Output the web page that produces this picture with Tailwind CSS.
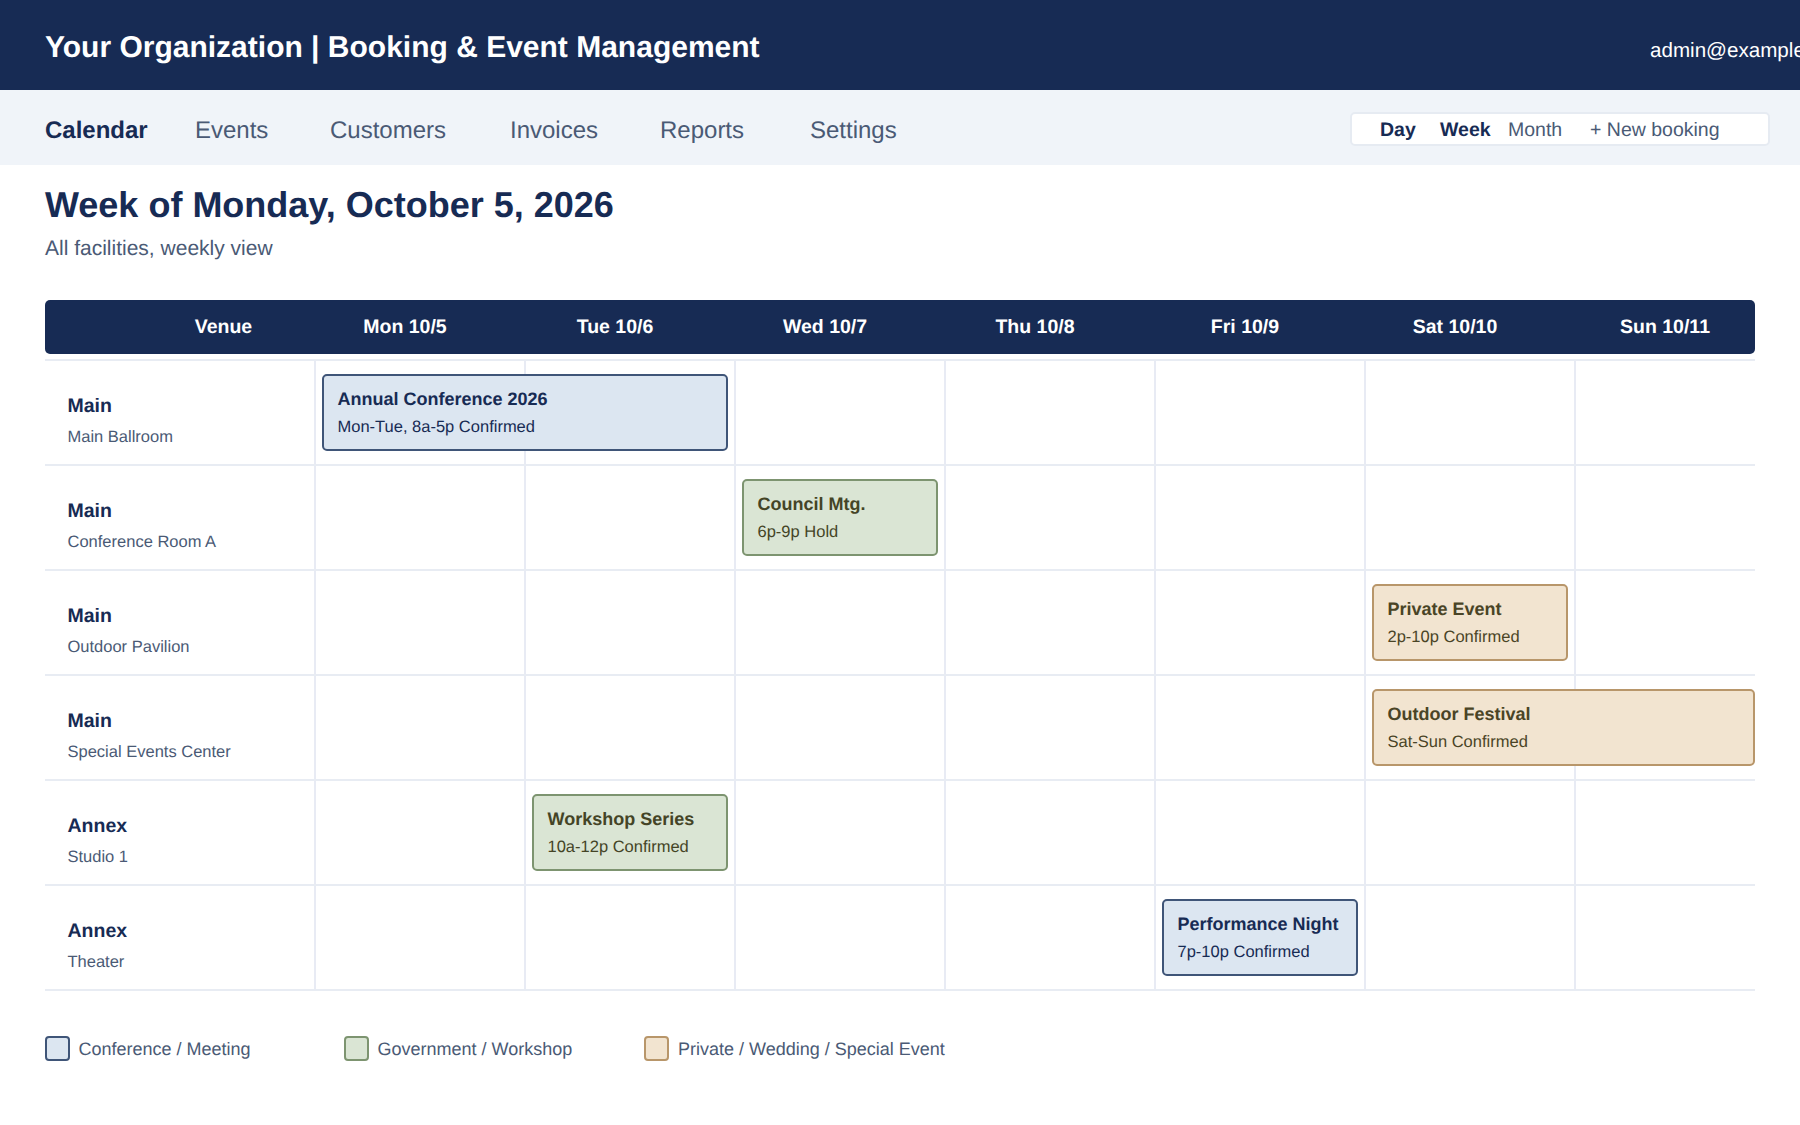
<!DOCTYPE html>
<html lang="en">
<head>
    <meta charset="UTF-8">
    <title>Booking &amp; Event Management</title>
    <script src="https://cdn.jsdelivr.net/npm/@tailwindcss/browser@4"></script>
</head>
<body class="bg-white overflow-hidden font-['Liberation_Sans',Arial,sans-serif] [text-rendering:geometricPrecision] h-[1125px] w-[1800px]">

    <header class="h-[90px] bg-[#172b54] flex justify-between text-white overflow-hidden pl-[45px]">
        <h1 class="text-[30px] font-bold leading-[34px] pt-[31px]">Your Organization | Booking &amp; Event Management</h1>
        <div class="text-[20.6px] leading-[24px] pt-[39px] w-[150px] whitespace-nowrap">admin@example.org</div>
    </header>

    <nav class="h-[75px] bg-[#f0f4f9] pl-[45px] pr-[30px] flex justify-between">
        <div class="grid grid-cols-[150px_135px_180px_150px_150px_auto] text-[24px] leading-[28px] text-[#4a5a75] pt-[27px]">
            <a class="font-bold text-[#172b54]">Calendar</a>
            <a>Events</a>
            <a>Customers</a>
            <a>Invoices</a>
            <a>Reports</a>
            <a>Settings</a>
        </div>
        <div class="mt-[22px] w-[420px] h-[34px] bg-white border-2 border-[#e6ebf2] rounded-[5px] pl-[28px] pt-[2px] grid grid-cols-[60px_68px_82px_auto] items-center text-[19.5px] leading-[24px] text-[#4a5a75]">
            <span class="font-bold text-[#172b54]">Day</span>
            <span class="font-bold text-[#172b54]">Week</span>
            <span>Month</span>
            <span>+ New booking</span>
        </div>
    </nav>

    <main class="px-[45px]">
        <h2 class="text-[36px] font-bold leading-[42px] text-[#172b54] pt-[19px]">Week of Monday, October 5, 2026</h2>
        <p class="text-[21px] leading-[24px] text-[#4a5a75] mt-[11px]">All facilities, weekly view</p>

        <div class="mt-[39px] h-[54px] bg-[#172b54] rounded-[5px] overflow-hidden grid grid-cols-[255px_repeat(7,210px)] items-center text-center text-white text-[19.5px] font-bold leading-[22px] whitespace-nowrap">
            <div class="pl-[102px]">Venue</div>
            <div>Mon 10/5</div>
            <div>Tue 10/6</div>
            <div>Wed 10/7</div>
            <div>Thu 10/8</div>
            <div>Fri 10/9</div>
            <div>Sat 10/10</div>
            <div>Sun 10/11</div>
        </div>

        <div class="mt-[5px] border-b-2 border-[#e8ecf3]">

            <!-- Main Ballroom -->
            <div class="h-[105px] border-t-2 border-[#e8ecf3] grid grid-cols-[269px_repeat(6,210px)_181px]">
                <div class="col-start-1 row-start-1 pl-[22.5px] pt-[34px]">
                    <div class="text-[19.5px] font-bold leading-[22px] text-[#172b54]">Main</div>
                    <div class="text-[16.5px] leading-[19px] text-[#4a5a75] mt-[11px]">Main Ballroom</div>
                </div>
                <div class="col-start-2 row-start-1 border-l-2 border-[#e8ebf4]"></div>
                <div class="col-start-3 row-start-1 border-l-2 border-[#e8ebf4]"></div>
                <div class="col-start-4 row-start-1 border-l-2 border-[#e8ebf4]"></div>
                <div class="col-start-5 row-start-1 border-l-2 border-[#e8ebf4]"></div>
                <div class="col-start-6 row-start-1 border-l-2 border-[#e8ebf4]"></div>
                <div class="col-start-7 row-start-1 border-l-2 border-[#e8ebf4]"></div>
                <div class="col-start-8 row-start-1 border-l-2 border-[#e8ebf4]"></div>
                <div class="col-start-2 col-span-2 row-start-1 ml-[8px] mr-[6px] mt-[13px] h-[77px] bg-[#dce6f1] border-2 border-[#3f5578] rounded-[5px] pl-[13.5px] pt-[13px] text-[#172b54]">
                    <div class="text-[18px] font-bold leading-[21px]">Annual Conference 2026</div>
                    <div class="text-[16.5px] leading-[19px] mt-[8px]">Mon-Tue, 8a-5p Confirmed</div>
                </div>
            </div>

            <!-- Conference Room A -->
            <div class="h-[105px] border-t-2 border-[#e8ecf3] grid grid-cols-[269px_repeat(6,210px)_181px]">
                <div class="col-start-1 row-start-1 pl-[22.5px] pt-[34px]">
                    <div class="text-[19.5px] font-bold leading-[22px] text-[#172b54]">Main</div>
                    <div class="text-[16.5px] leading-[19px] text-[#4a5a75] mt-[11px]">Conference Room A</div>
                </div>
                <div class="col-start-2 row-start-1 border-l-2 border-[#e8ebf4]"></div>
                <div class="col-start-3 row-start-1 border-l-2 border-[#e8ebf4]"></div>
                <div class="col-start-4 row-start-1 border-l-2 border-[#e8ebf4]"></div>
                <div class="col-start-5 row-start-1 border-l-2 border-[#e8ebf4]"></div>
                <div class="col-start-6 row-start-1 border-l-2 border-[#e8ebf4]"></div>
                <div class="col-start-7 row-start-1 border-l-2 border-[#e8ebf4]"></div>
                <div class="col-start-8 row-start-1 border-l-2 border-[#e8ebf4]"></div>
                <div class="col-start-4 row-start-1 ml-[8px] mr-[6px] mt-[13px] h-[77px] bg-[#dae5d4] border-2 border-[#7d9470] rounded-[5px] pl-[13.5px] pt-[13px] text-[#444426]">
                    <div class="text-[18px] font-bold leading-[21px]">Council Mtg.</div>
                    <div class="text-[16.5px] leading-[19px] mt-[8px]">6p-9p Hold</div>
                </div>
            </div>

            <!-- Outdoor Pavilion -->
            <div class="h-[105px] border-t-2 border-[#e8ecf3] grid grid-cols-[269px_repeat(6,210px)_181px]">
                <div class="col-start-1 row-start-1 pl-[22.5px] pt-[34px]">
                    <div class="text-[19.5px] font-bold leading-[22px] text-[#172b54]">Main</div>
                    <div class="text-[16.5px] leading-[19px] text-[#4a5a75] mt-[11px]">Outdoor Pavilion</div>
                </div>
                <div class="col-start-2 row-start-1 border-l-2 border-[#e8ebf4]"></div>
                <div class="col-start-3 row-start-1 border-l-2 border-[#e8ebf4]"></div>
                <div class="col-start-4 row-start-1 border-l-2 border-[#e8ebf4]"></div>
                <div class="col-start-5 row-start-1 border-l-2 border-[#e8ebf4]"></div>
                <div class="col-start-6 row-start-1 border-l-2 border-[#e8ebf4]"></div>
                <div class="col-start-7 row-start-1 border-l-2 border-[#e8ebf4]"></div>
                <div class="col-start-8 row-start-1 border-l-2 border-[#e8ebf4]"></div>
                <div class="col-start-7 row-start-1 ml-[8px] mr-[6px] mt-[13px] h-[77px] bg-[#f2e4d0] border-2 border-[#b8966a] rounded-[5px] pl-[13.5px] pt-[13px] text-[#4a4426]">
                    <div class="text-[18px] font-bold leading-[21px]">Private Event</div>
                    <div class="text-[16.5px] leading-[19px] mt-[8px]">2p-10p Confirmed</div>
                </div>
            </div>

            <!-- Special Events Center -->
            <div class="h-[105px] border-t-2 border-[#e8ecf3] grid grid-cols-[269px_repeat(6,210px)_181px]">
                <div class="col-start-1 row-start-1 pl-[22.5px] pt-[34px]">
                    <div class="text-[19.5px] font-bold leading-[22px] text-[#172b54]">Main</div>
                    <div class="text-[16.5px] leading-[19px] text-[#4a5a75] mt-[11px]">Special Events Center</div>
                </div>
                <div class="col-start-2 row-start-1 border-l-2 border-[#e8ebf4]"></div>
                <div class="col-start-3 row-start-1 border-l-2 border-[#e8ebf4]"></div>
                <div class="col-start-4 row-start-1 border-l-2 border-[#e8ebf4]"></div>
                <div class="col-start-5 row-start-1 border-l-2 border-[#e8ebf4]"></div>
                <div class="col-start-6 row-start-1 border-l-2 border-[#e8ebf4]"></div>
                <div class="col-start-7 row-start-1 border-l-2 border-[#e8ebf4]"></div>
                <div class="col-start-8 row-start-1 border-l-2 border-[#e8ebf4]"></div>
                <div class="col-start-7 col-span-2 row-start-1 ml-[8px] mt-[13px] h-[77px] bg-[#f2e4d0] border-2 border-[#b8966a] rounded-[5px] pl-[13.5px] pt-[13px] text-[#4a4426]">
                    <div class="text-[18px] font-bold leading-[21px]">Outdoor Festival</div>
                    <div class="text-[16.5px] leading-[19px] mt-[8px]">Sat-Sun Confirmed</div>
                </div>
            </div>

            <!-- Studio 1 -->
            <div class="h-[105px] border-t-2 border-[#e8ecf3] grid grid-cols-[269px_repeat(6,210px)_181px]">
                <div class="col-start-1 row-start-1 pl-[22.5px] pt-[34px]">
                    <div class="text-[19.5px] font-bold leading-[22px] text-[#172b54]">Annex</div>
                    <div class="text-[16.5px] leading-[19px] text-[#4a5a75] mt-[11px]">Studio 1</div>
                </div>
                <div class="col-start-2 row-start-1 border-l-2 border-[#e8ebf4]"></div>
                <div class="col-start-3 row-start-1 border-l-2 border-[#e8ebf4]"></div>
                <div class="col-start-4 row-start-1 border-l-2 border-[#e8ebf4]"></div>
                <div class="col-start-5 row-start-1 border-l-2 border-[#e8ebf4]"></div>
                <div class="col-start-6 row-start-1 border-l-2 border-[#e8ebf4]"></div>
                <div class="col-start-7 row-start-1 border-l-2 border-[#e8ebf4]"></div>
                <div class="col-start-8 row-start-1 border-l-2 border-[#e8ebf4]"></div>
                <div class="col-start-3 row-start-1 ml-[8px] mr-[6px] mt-[13px] h-[77px] bg-[#dae5d4] border-2 border-[#7d9470] rounded-[5px] pl-[13.5px] pt-[13px] text-[#444426]">
                    <div class="text-[18px] font-bold leading-[21px]">Workshop Series</div>
                    <div class="text-[16.5px] leading-[19px] mt-[8px]">10a-12p Confirmed</div>
                </div>
            </div>

            <!-- Theater -->
            <div class="h-[105px] border-t-2 border-[#e8ecf3] grid grid-cols-[269px_repeat(6,210px)_181px]">
                <div class="col-start-1 row-start-1 pl-[22.5px] pt-[34px]">
                    <div class="text-[19.5px] font-bold leading-[22px] text-[#172b54]">Annex</div>
                    <div class="text-[16.5px] leading-[19px] text-[#4a5a75] mt-[11px]">Theater</div>
                </div>
                <div class="col-start-2 row-start-1 border-l-2 border-[#e8ebf4]"></div>
                <div class="col-start-3 row-start-1 border-l-2 border-[#e8ebf4]"></div>
                <div class="col-start-4 row-start-1 border-l-2 border-[#e8ebf4]"></div>
                <div class="col-start-5 row-start-1 border-l-2 border-[#e8ebf4]"></div>
                <div class="col-start-6 row-start-1 border-l-2 border-[#e8ebf4]"></div>
                <div class="col-start-7 row-start-1 border-l-2 border-[#e8ebf4]"></div>
                <div class="col-start-8 row-start-1 border-l-2 border-[#e8ebf4]"></div>
                <div class="col-start-6 row-start-1 ml-[8px] mr-[6px] mt-[13px] h-[77px] bg-[#dce6f1] border-2 border-[#3f5578] rounded-[5px] pl-[13.5px] pt-[13px] text-[#172b54]">
                    <div class="text-[18px] font-bold leading-[21px]">Performance Night</div>
                    <div class="text-[16.5px] leading-[19px] mt-[8px]">7p-10p Confirmed</div>
                </div>
            </div>
        </div>

        <!-- legend -->
        <div class="mt-[45px] grid grid-cols-[299px_300px_auto] text-[18px] leading-[21px] text-[#4a5a75]">
            <div class="flex items-center gap-[8.5px]">
                <span class="w-[25px] h-[25px] mb-[2px] bg-[#dce6f1] border-2 border-[#3f5578] rounded-[4px]"></span>
                <span>Conference / Meeting</span>
            </div>
            <div class="flex items-center gap-[8.5px]">
                <span class="w-[25px] h-[25px] mb-[2px] bg-[#dae5d4] border-2 border-[#7d9470] rounded-[4px]"></span>
                <span>Government / Workshop</span>
            </div>
            <div class="flex items-center gap-[9px]">
                <span class="w-[25px] h-[25px] mb-[2px] bg-[#f2e4d0] border-2 border-[#b8966a] rounded-[4px]"></span>
                <span>Private / Wedding / Special Event</span>
            </div>
        </div>
    </main>
</body>
</html>
